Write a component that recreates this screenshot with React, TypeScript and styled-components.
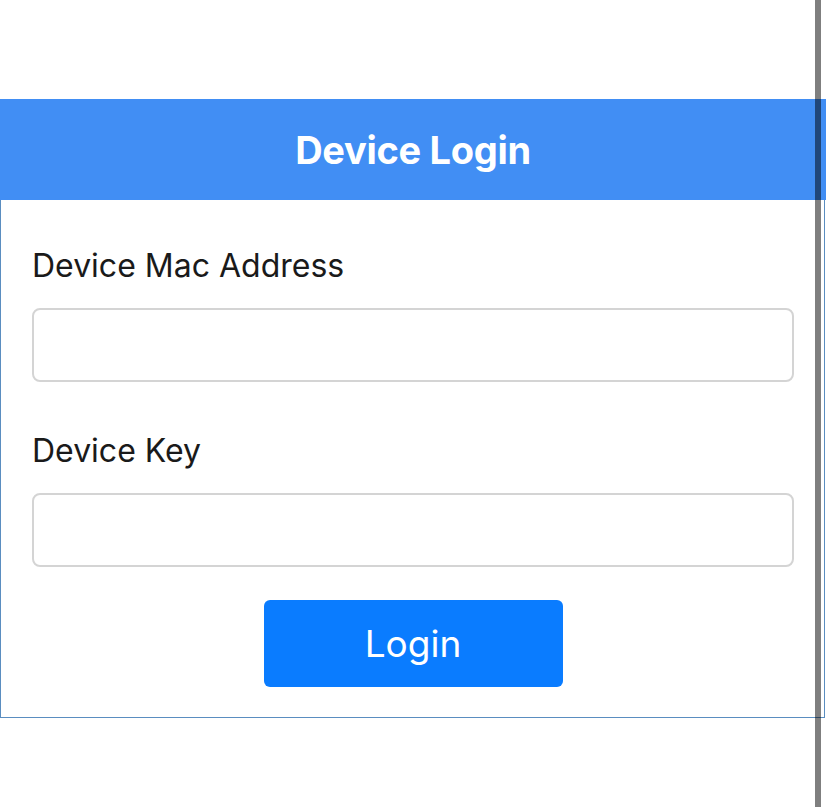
import React from "react";
import styled, { createGlobalStyle } from "styled-components";

const Global = createGlobalStyle`
  html, body { margin: 0; padding: 0; background: #ffffff; }
  body { font-family: Inter, "Noto Sans", sans-serif; }
  * { box-sizing: border-box; }
`;

const Page = styled.div`
  padding-top: 99px;
`;

const Card = styled.section`
  width: 825px;
  border: 1px solid #5a8dc0;
  border-top: none;
  background: #ffffff;
`;

const Header = styled.header`
  height: 101px;
  margin: 0 -1px 0 -1px;
  width: 826px;
  background: #418ef4;
  display: flex;
  align-items: center;
  justify-content: center;
`;

const Title = styled.h1`
  margin: 0;
  color: #ffffff;
  font-size: 38px;
  font-weight: 700;
  letter-spacing: -0.3px;
`;

const Form = styled.form`
  display: flex;
  flex-direction: column;
  padding: 47px 30px 30px 31px;
`;

const Field = styled.div<{ $last?: boolean }>`
  display: flex;
  flex-direction: column;
  margin-bottom: ${(p) => (p.$last ? "33px" : "50px")};
`;

const Label = styled.label`
  font-size: 32px;
  line-height: 38px;
  color: #1a1a1a;
  margin-bottom: 23px;
`;

const Input = styled.input`
  height: 74px;
  width: 100%;
  border: 2px solid #d4d4d4;
  border-radius: 8px;
  background: #ffffff;
  font-size: 30px;
  padding: 0 16px;
  outline: none;
`;

const Button = styled.button`
  align-self: center;
  width: 299px;
  height: 87px;
  border: none;
  border-radius: 6px;
  background: #0a7cff;
  color: #ffffff;
  font-family: Inter, "Noto Sans", sans-serif;
  font-size: 37px;
  font-weight: 400;
  cursor: pointer;
`;

const ScrollIndicator = styled.div`
  position: fixed;
  top: 0;
  bottom: 0;
  left: 815px;
  width: 6px;
  background: rgba(0, 0, 0, 0.5);
`;

export default function App() {
  return (
    <>
      <Global />
      <Page>
        <Card>
          <Header>
            <Title>Device Login</Title>
          </Header>
          <Form onSubmit={(e) => e.preventDefault()}>
            <Field>
              <Label htmlFor="mac">Device Mac Address</Label>
              <Input id="mac" type="text" />
            </Field>
            <Field $last>
              <Label htmlFor="key">Device Key</Label>
              <Input id="key" type="password" />
            </Field>
            <Button type="submit">Login</Button>
          </Form>
        </Card>
      </Page>
      <ScrollIndicator />
    </>
  );
}
